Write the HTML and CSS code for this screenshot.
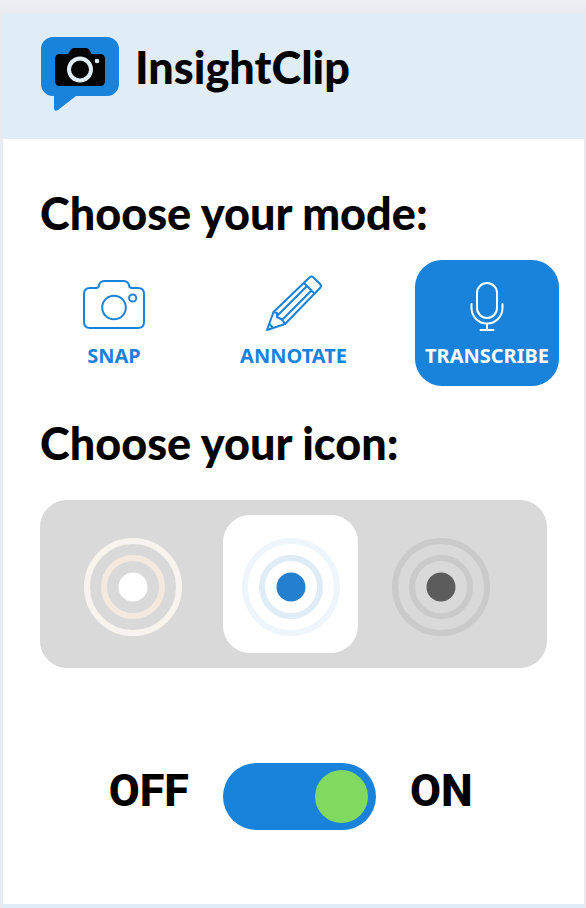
FILE: index.html
```html
<!DOCTYPE html>
<html lang="en">
<head>
<meta charset="utf-8">
<meta name="viewport" content="width=device-width, initial-scale=1">
<title>InsightClip</title>
<link rel="stylesheet" href="styles.css">
</head>
<body>
<div class="popup">
  <header class="header">
    <svg class="logo" viewBox="0 0 78 74" aria-hidden="true">
      <path fill="#1982da" d="M12 0H66A12 12 0 0 1 78 12V47A12 12 0 0 1 66 59H35L17 73Q13 75 13 71V59H12A12 12 0 0 1 0 47V12A12 12 0 0 1 12 0Z"/>
      <path fill="#050505" d="M19 17H27L30 12.500Q31 11 33 11H45Q47 11 48 12.500L50.500 17H59Q64 17 64 22V44Q64 49 59 49H19Q14 49 14 44V22Q14 17 19 17Z"/>
      <circle cx="39" cy="32.500" r="11" fill="none" stroke="#e0edf7" stroke-width="4"/>
      <circle cx="56" cy="24" r="2.300" fill="#e0edf7"/>
    </svg>
    <h1 class="title">InsightClip</h1>
  </header>
  <main class="content">
    <h2 class="title">Choose your mode:</h2>
    <div class="modes">
      <button class="mode" type="button">
        <svg class="mode-icon" viewBox="0 0 64 56" aria-hidden="true">
          <path d="M8 12H14Q17 12 17 9Q18 5 23 5H41Q46 5 47 9Q47 12 50 12H56Q62 12 62 18V46Q62 52 56 52H8Q2 52 2 46V18Q2 12 8 12Z"/>
          <circle cx="32" cy="31.500" r="11.800"/>
          <circle cx="50.700" cy="22" r="3.600"/>
        </svg>
        <span>SNAP</span>
      </button>
      <button class="mode" type="button">
        <svg class="mode-icon thin" viewBox="0 0 64 56" aria-hidden="true">
          <path d="M5 54L11.500 36L47.500 1.500Q49.500 -.5 51.500 1.500L58 8Q60 10 58 12L23 48Z"/>
          <path d="M42 7L52.500 17.500M45 10L15 40M49.500 14.500L20 44M11.500 36L15 37V41L20 43.500L23 48M7.500 48L11 52"/>
        </svg>
        <span>ANNOTATE</span>
      </button>
      <button class="mode selected" type="button" aria-pressed="true">
        <svg class="mode-icon" viewBox="0 0 64 56" aria-hidden="true">
          <rect x="22" y="7" width="20" height="35" rx="10"/>
          <path d="M16.500 28V32A15.500 15.500 0 0 0 47.500 32V28M32 47.500V54M25.500 54H38.500"/>
        </svg>
        <span>TRANSCRIBE</span>
      </button>
    </div>
    <h2 class="title">Choose your icon:</h2>
    <div class="icons" role="radiogroup" aria-label="Icon">
      <label class="tile">
        <input type="radio" name="icon" aria-label="Light">
        <svg class="target light" viewBox="0 0 98 98" aria-hidden="true"><circle class="outer" cx="49" cy="49" r="46"/><circle class="inner" cx="49" cy="49" r="29"/><circle class="dot" cx="49" cy="49" r="14.500"/></svg>
      </label>
      <label class="tile">
        <input type="radio" name="icon" aria-label="Blue" checked>
        <svg class="target blue" viewBox="0 0 98 98" aria-hidden="true"><circle class="outer" cx="49" cy="49" r="46"/><circle class="inner" cx="49" cy="49" r="29"/><circle class="dot" cx="49" cy="49" r="14.500"/></svg>
      </label>
      <label class="tile">
        <input type="radio" name="icon" aria-label="Dark">
        <svg class="target dark" viewBox="0 0 98 98" aria-hidden="true"><circle class="outer" cx="49" cy="49" r="46"/><circle class="inner" cx="49" cy="49" r="29"/><circle class="dot" cx="49" cy="49" r="14.500"/></svg>
      </label>
    </div>
    <div class="power">
      <label class="state off" for="power">OFF</label>
      <input class="switch" id="power" type="checkbox" role="switch" checked>
      <label class="state" for="power">ON</label>
    </div>
  </main>
</div>
</body>
</html>
```
FILE: styles.css
```css
* {
  box-sizing: border-box;
}

body {
  margin: 0;
  padding: 13px 2px 0 3px;
  min-height: 100vh;
  display: flex;
  background: linear-gradient(#eff0f4, #e9eaef 13px);
  font-family: "Noto Sans", sans-serif;
  color: #000;
}

.popup {
  flex: 1;
  display: flex;
  flex-direction: column;
  background: #fff;
  border-bottom: 4px solid #e0edf7;
}

.header {
  display: flex;
  align-items: flex-start;
  gap: 16px;
  height: 126px;
  padding: 24px 38px;
  background: #e0ecf6;
}

.logo {
  width: 78px;
  height: 74px;
}

.title {
  margin: 0;
  font: 900 45px/60px Lato, sans-serif;
}

.content {
  padding: 44px 25px 72px 37px;
}

.modes {
  display: grid;
  grid-template-columns: 148fr 211fr 160fr;
  margin: 17px 0 27px;
}

.mode {
  display: flex;
  flex-direction: column;
  align-items: center;
  justify-self: center;
  gap: 10px;
  height: 126px;
  padding: 16px 10px;
  border: 0;
  border-radius: 27px;
  background: none;
  color: #1982da;
  font: 700 20px/28px "Noto Sans", sans-serif;
}

.mode.selected {
  justify-self: end;
  background: #1982da;
  color: #fff;
}

.mode-icon {
  width: 64px;
  height: 56px;
  overflow: visible;
  fill: none;
  stroke: currentColor;
  stroke-width: 2;
  stroke-linecap: round;
  stroke-linejoin: round;
}

.icons {
  display: grid;
  grid-template-columns: 180fr 135fr 166fr;
  justify-items: center;
  margin: 27px 12px 95px 0;
  padding: 15px 23px 15px 3px;
  border-radius: 27px;
  background: #d9d9d9;
}

.tile {
  display: grid;
  place-items: center;
  width: 135px;
  height: 138px;
  border-radius: 27px;
}

.tile:has(:checked) {
  background: #fff;
}

.tile input {
  appearance: none;
  grid-area: 1 / 1;
  width: 98px;
  height: 98px;
  margin: 0;
  border-radius: 50%;
}

.target {
  grid-area: 1 / 1;
  width: 98px;
  height: 98px;
  margin-top: 6px;
  fill: none;
  stroke-width: 6;
}

.light .outer { stroke: #f7f4ef; }
.light .inner { stroke: #f3e9df; }
.light .dot { fill: #fff; }
.blue .outer { stroke: #eff6fb; }
.blue .inner { stroke: #dfecf5; }
.blue .dot { fill: #2380cf; }
.dark .outer,
.dark .inner { stroke: #cacaca; }
.dark .dot { fill: #5c5c5c; }

.power {
  display: grid;
  grid-template-columns: 1fr auto 1fr;
  column-gap: 34px;
}

.state {
  font: 800 45px/56px Roboto, sans-serif;
}

.off {
  text-align: right;
}

.switch {
  appearance: none;
  display: flex;
  justify-content: flex-end;
  align-items: center;
  width: 153px;
  height: 67px;
  margin: 0;
  padding: 0 8px;
  border-radius: 34px;
  background: #1982da;
}

.switch::before {
  content: "";
  width: 53px;
  height: 53px;
  border-radius: 50%;
  background: #82d95f;
}

.switch:not(:checked) {
  justify-content: flex-start;
}
```
